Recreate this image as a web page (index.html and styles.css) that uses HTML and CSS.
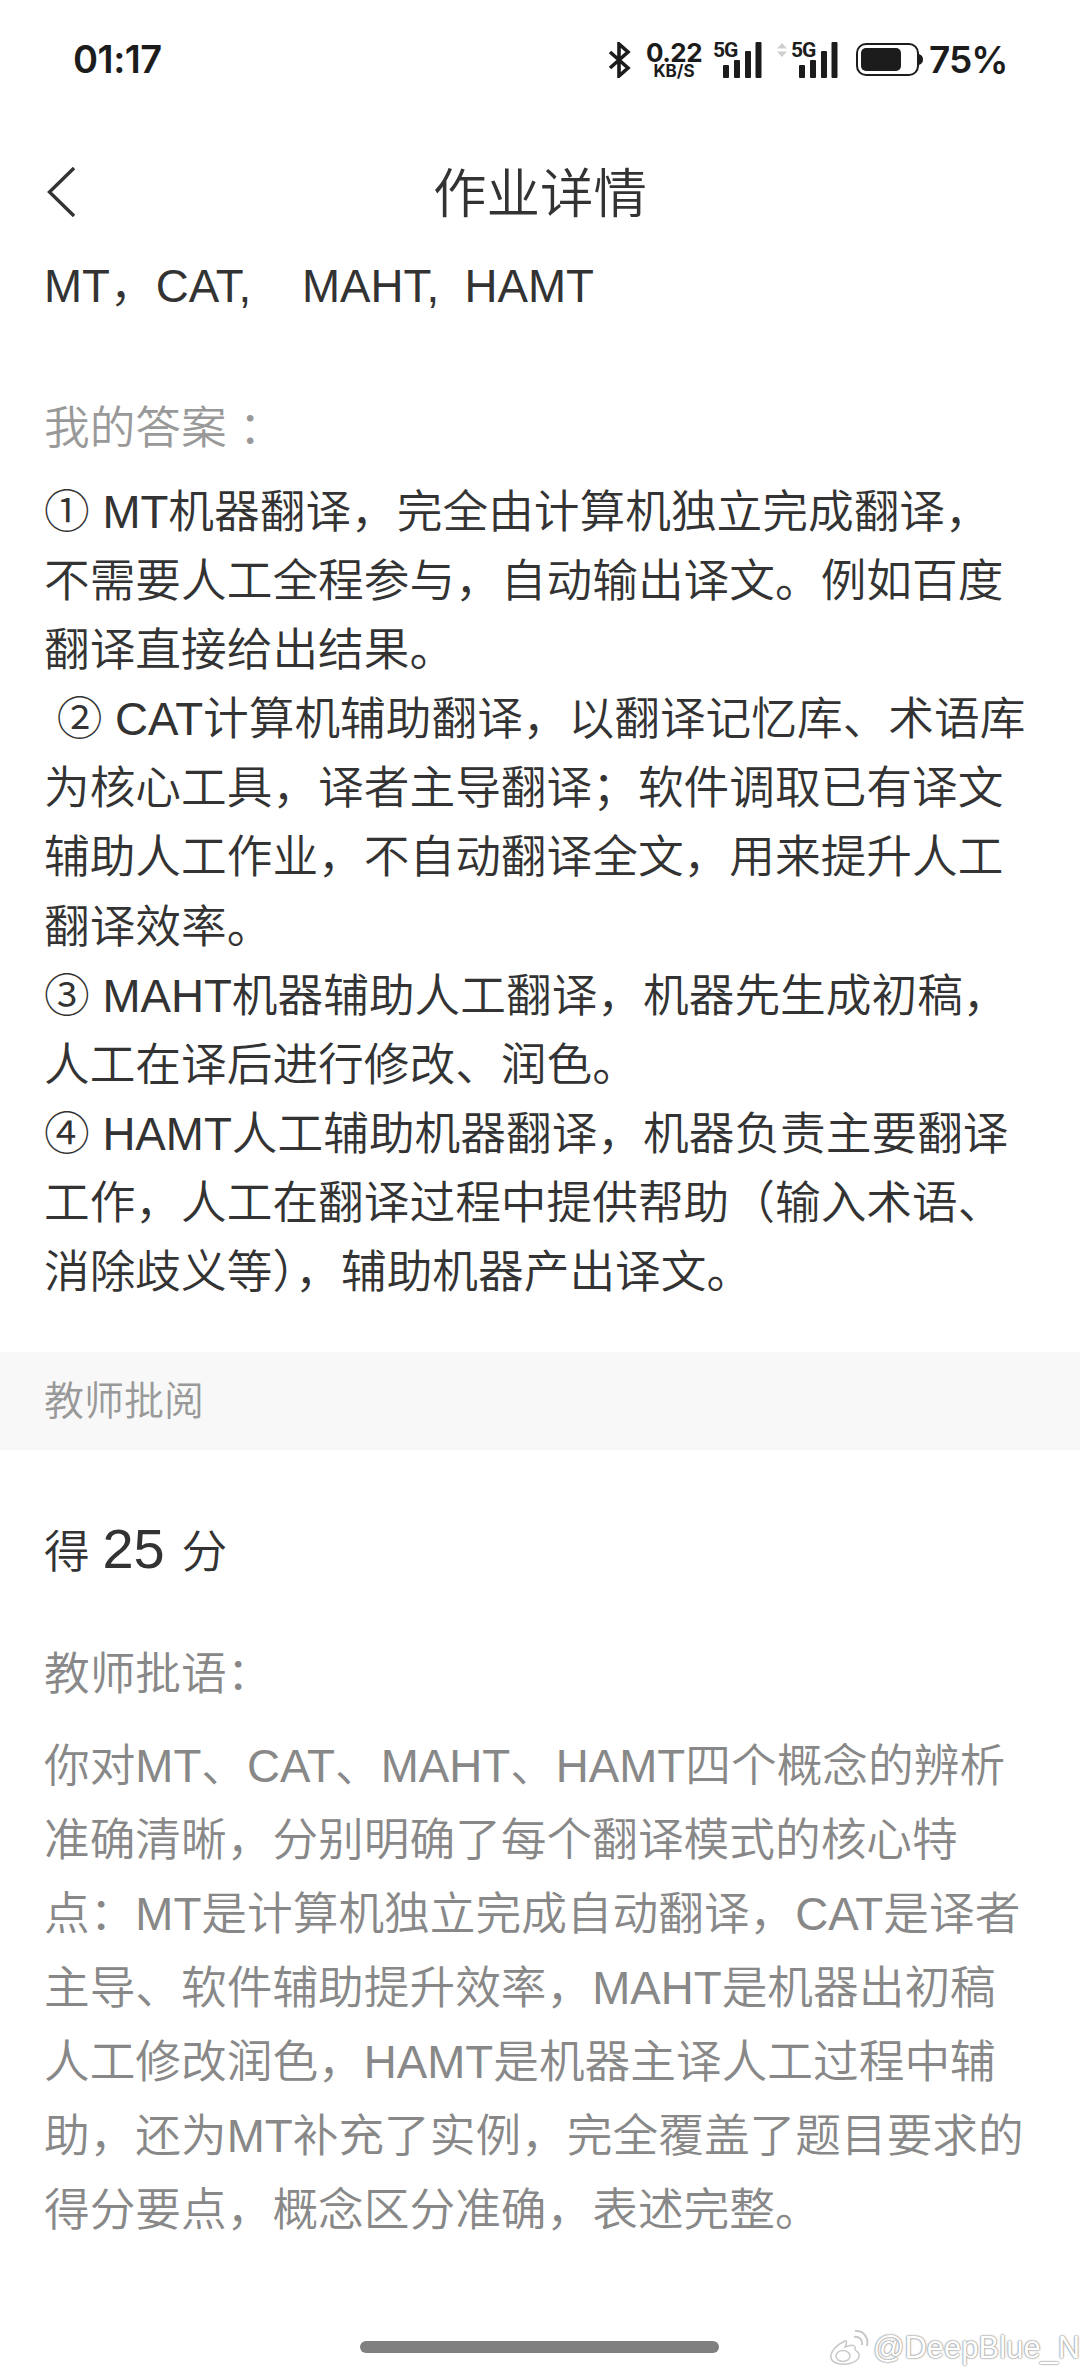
FILE: index.html
```html
<!DOCTYPE html>
<html lang="zh-CN">
<head>
<meta charset="utf-8">
<title>作业详情</title>
<link rel="stylesheet" href="styles.css">
</head>
<body>
<div class="page">
  <header class="status">
    <span class="time">01:17</span>
    <div class="status-right">
      <svg class="bt" viewBox="0 0 24 36" width="24" height="36"><path d="M2 10 L20 26 L11 34 V2 L20 10 L2 26" fill="none" stroke="#1c1c1c" stroke-width="3.6" stroke-linejoin="miter"/></svg>
      <div class="speed"><span class="speed-num">0.22</span><span class="speed-unit">KB/S</span></div>
      <div class="signal">
        <span class="five">5G</span>
        <svg class="bars" viewBox="0 0 39 36" width="39" height="36"><rect x="0" y="23" width="6" height="13" rx="1"/><rect x="11" y="18" width="6" height="18" rx="1"/><rect x="22" y="9" width="6" height="27" rx="1"/><rect x="32.500" y="0" width="6" height="36" rx="1"/></svg>
      </div>
      <div class="signal second">
        <svg class="arrows" viewBox="0 0 10 14" width="10" height="14"><path d="M5 0 L10 5.500 H0 Z M5 14 L10 8.500 H0 Z" fill="#cfcfcf"/></svg>
        <span class="five">5G</span>
        <svg class="bars" viewBox="0 0 39 36" width="39" height="36"><rect x="0" y="23" width="6" height="13" rx="1"/><rect x="11" y="18" width="6" height="18" rx="1"/><rect x="22" y="9" width="6" height="27" rx="1"/><rect x="32.500" y="0" width="6" height="36" rx="1"/></svg>
      </div>
      <svg class="battery" viewBox="0 0 67 33" width="67" height="33"><rect x="1" y="1" width="61" height="31" rx="9" fill="none" stroke="#1c1c1c" stroke-width="2"/><rect x="5" y="5" width="40" height="23" rx="5" fill="#1c1c1c"/><path d="M63 11 C66 12 67 14 67 16.500 C67 19 66 21 63 22 Z" fill="#1c1c1c"/></svg>
      <span class="percent">75%</span>
    </div>
  </header>

  <nav class="nav">
    <svg class="back" viewBox="0 0 28 50" width="28" height="50"><path d="M27 1 L2.500 25 L27 49" fill="none" stroke="#333" stroke-width="3.400"/></svg>
    <h1 class="title">作业详情</h1>
  </nav>

  <section class="answer">
    <p class="question">MT，CAT,&nbsp;&nbsp;&nbsp;&nbsp;MAHT,&nbsp;&nbsp;HAMT</p>
    <p class="label">我的答案<span class="colon">：</span></p>
    <p class="body-text">① MT机器翻译，完全由计算机独立完成翻译，<br>不需要人工全程参与，自动输出译文。例如百度<br>翻译直接给出结果。<br>&nbsp;② CAT计算机辅助翻译，以翻译记忆库、术语库<br>为核心工具，译者主导翻译；软件调取已有译文<br>辅助人工作业，不自动翻译全文，用来提升人工<br>翻译效率。<br>③ MAHT机器辅助人工翻译，机器先生成初稿，<br>人工在译后进行修改、润色。<br>④ HAMT人工辅助机器翻译，机器负责主要翻译<br>工作，人工在翻译过程中提供帮助（输入术语、<br>消除歧义等），辅助机器产出译文。</p>
  </section>

  <div class="band">教师批阅</div>

  <section class="review">
    <p class="score">得 <span class="score-num">25</span> 分</p>
    <p class="comment-label">教师批语：</p>
    <p class="comment">你对MT、CAT、MAHT、HAMT四个概念的辨析<br>准确清晰，分别明确了每个翻译模式的核心特<br>点：MT是计算机独立完成自动翻译，CAT是译者<br>主导、软件辅助提升效率，MAHT是机器出初稿<br>人工修改润色，HAMT是机器主译人工过程中辅<br>助，还为MT补充了实例，完全覆盖了题目要求的<br>得分要点，概念区分准确，表述完整。</p>
  </section>

  <div class="home-bar"></div>
  <div class="watermark">
    <svg viewBox="0 0 40 36" width="40" height="36"><path d="M16 11 C7 15 1 22 2 28 C3 33 11 35 18 34 C26 33 31 29 30 24 C29 21 26 21 26 19 C27 15 23 14 16 17 C18 13 18 10 16 11 Z" fill="#fff" stroke="#c9c9c9" stroke-width="1.500"/><ellipse cx="14" cy="26" rx="7" ry="5.500" fill="none" stroke="#c9c9c9" stroke-width="1.500"/><path d="M25 7 C30 6 34 10 33 15 M26 1 C34 0 40 7 38 16" fill="none" stroke="#c9c9c9" stroke-width="2"/></svg>
    <span class="wm-text">@DeepBlue_N</span>
  </div>
</div>
</body>
</html>
```
FILE: styles.css
```css
* { box-sizing: border-box; margin: 0; padding: 0; }
html, body { background: #fff; }
body {
  width: 1080px;
  height: 2374px;
  overflow: hidden;
  font-family: "Liberation Sans", "Noto Sans CJK SC", sans-serif;
  font-weight: 350;
  color: #333;
}
.page { position: relative; width: 1080px; height: 2374px; }

.status {
  height: 120px;
  display: flex;
  justify-content: space-between;
  align-items: flex-start;
  padding: 36px 75px 0 73px;
  color: #1c1c1c;
}
.time { font-family: Inter, Roboto, sans-serif; font-size: 38px; line-height: 46px; font-weight: 600; letter-spacing: -0.5px; }
.status-right { display: flex; align-items: flex-start; }
.bt { margin-top: 6px; flex: none; }
.speed { display: flex; flex-direction: column; align-items: center; margin-left: 14px; width: 56px; font-family: Inter, Roboto, sans-serif; font-weight: 700; }
.speed-num { font-size: 26px; line-height: 24px; margin-top: 5px; letter-spacing: -0.5px; }
.speed-unit { font-size: 17px; line-height: 13px; }
.signal { position: relative; display: flex; flex: none; width: 49px; height: 36px; margin-left: 11px; margin-top: 6px; justify-content: flex-end; }
.signal.second { width: 61px; margin-left: 15px; }
.five { position: absolute; font-family: Roboto, sans-serif; font-weight: 700; font-size: 21px; line-height: 18px; top: -1px; left: 0; letter-spacing: -1px; }
.second .five { left: 14px; }
.arrows { position: absolute; left: 0; top: 1px; }
.bars { fill: #1c1c1c; flex: none; }
.battery { margin-left: 18px; margin-top: 7px; flex: none; }
.percent { font-family: Inter, Roboto, sans-serif; font-size: 37px; line-height: 46px; font-weight: 600; margin-left: 6px; margin-top: 1px; letter-spacing: -1px; width: 76px; white-space: nowrap; }

.nav { position: relative; height: 121px; display: flex; align-items: center; justify-content: center; }
.back { position: absolute; left: 47px; top: 47px; }
.title { font-size: 53.500px; font-weight: 350; line-height: 106px; margin-top: 28px; }

.answer { padding: 0 44px; }
.question { font-size: 45.700px; line-height: 62px; margin-top: 14.500px; white-space: nowrap; }
.label { font-size: 45.700px; line-height: 62px; margin-top: 80px; color: #999; }
.colon { padding-left: 12px; }
.body-text { font-size: 45.700px; line-height: 69.100px; margin-top: 18.500px; white-space: nowrap; }

.band {
  height: 98px;
  margin-top: 45px;
  background: #f8f8f8;
  color: #999;
  font-size: 40px;
  line-height: 98px;
  padding-left: 44px;
}

.review { padding: 0 44px; }
.score { font-size: 45.700px; line-height: 70px; margin-top: 64px; white-space: nowrap; }
.score-num { font-size: 56px; padding-right: 4px; }
.comment-label { font-size: 45.700px; line-height: 62px; margin-top: 56px; color: #888; }
.comment { font-size: 45.700px; line-height: 74px; margin-top: 24px; color: #888; white-space: nowrap; }

.home-bar {
  position: absolute;
  left: 360px;
  top: 2341px;
  width: 359px;
  height: 12px;
  border-radius: 6px;
  background: #808080;
}
.watermark {
  position: absolute;
  left: 829px;
  top: 2330px;
  display: flex;
  align-items: center;
  gap: 4px;
}
.wm-text {
  font-family: "Liberation Sans", sans-serif;
  font-size: 31px;
  line-height: 36px;
  color: #fff;
  text-shadow: 0 0 2px #999, 0 0 2px #999, 0 0 1px #999;
}
```
